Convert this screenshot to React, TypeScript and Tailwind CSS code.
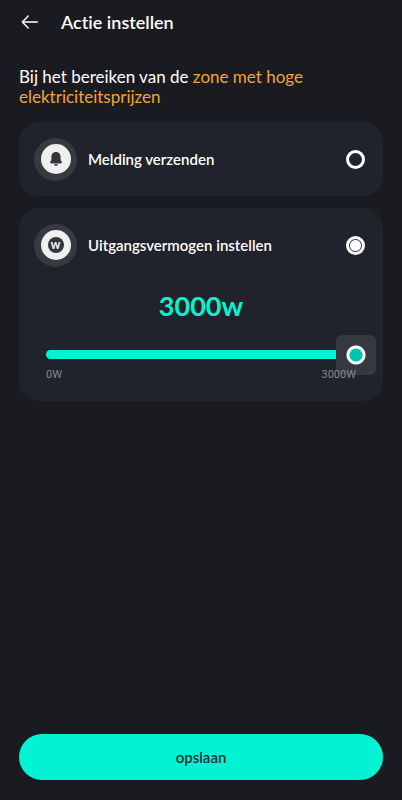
import { useState } from 'react';
import type { ReactNode } from 'react';

type Action = 'notify' | 'power';

const MAX_POWER = 3000;

const BellIcon = () => (
  <svg viewBox="0 0 14 16" className="h-4 w-[14px]" fill="#33363d" aria-hidden="true">
    <path d="M7 1C4 1 2.400 3.300 2.400 6v2.400c0 .8-.4 1.300-.9 1.900-.8 1-.3 2.100.9 2.100h9.200c1.200 0 1.700-1.100.9-2.100-.5-.6-.9-1.100-.9-1.900V6C11.600 3.300 10 1 7 1z" />
    <path d="M5 13.200h4c-.2 1-1 1.700-2 1.700s-1.800-.7-2-1.700z" />
  </svg>
);

const WattIcon = () => (
  <span className="flex size-4 items-center justify-center rounded-full bg-[#33363d] text-[9px] leading-none font-black text-white">
    W
  </span>
);

interface OptionProps {
  id: Action;
  label: string;
  icon: ReactNode;
  selected: Action;
  onSelect: (id: Action) => void;
}

const ActionOption = ({ id, label, icon, selected, onSelect }: OptionProps) => (
  <label className="flex h-[74px] cursor-pointer items-center pr-[18px] pl-[15px]">
    <span className="flex size-[43px] shrink-0 items-center justify-center rounded-full bg-[#383a41]">
      <span className="flex size-[30px] items-center justify-center rounded-full bg-[#efefef]">{icon}</span>
    </span>
    <span className="ml-[11px] flex-1 text-[15px] font-semibold">{label}</span>
    <input
      type="radio"
      name="action"
      value={id}
      checked={selected === id}
      onChange={() => onSelect(id)}
      className="size-[19px] appearance-none rounded-full border-[3px] border-white bg-clip-padding checked:bg-[radial-gradient(circle,#fff_5px,#33363d_6px)]"
    />
  </label>
);

const App = () => {
  const [selected, setSelected] = useState<Action>('power');
  const [power, setPower] = useState(MAX_POWER);

  return (
    <div className="flex min-h-screen flex-col bg-[#1a1b20] font-['Lato',sans-serif] text-white [font-variant-ligatures:none]">
      <header className="flex h-11 items-center pl-5">
        <button type="button" aria-label="Terug" className="flex size-5 items-center justify-center">
          <svg viewBox="0 0 20 20" className="size-5" fill="none" stroke="currentColor" strokeWidth="1.400" strokeLinecap="round" strokeLinejoin="round">
            <path d="M17.300 10H2.400M8.200 4 2.300 10l5.900 6" />
          </svg>
        </button>
        <h1 className="ml-[21px] text-[18px] leading-5 font-semibold">Actie instellen</h1>
      </header>

      <main className="flex flex-1 flex-col px-[19px] pt-[23px] pb-5">
        <p className="text-[17px] leading-5">
          Bij het bereiken van de <span className="text-[#f0a33c]">zone met hoge elektriciteitsprijzen</span>
        </p>

        <section className="mt-[15px] rounded-[20px] bg-[#21232c]">
          <ActionOption id="notify" label="Melding verzenden" icon={<BellIcon />} selected={selected} onSelect={setSelected} />
        </section>

        <section className="mt-3 rounded-[20px] bg-[#21232c] pb-[18px]">
          <ActionOption id="power" label="Uitgangsvermogen instellen" icon={<WattIcon />} selected={selected} onSelect={setSelected} />
          <output htmlFor="power" className="block text-center text-[27px] leading-[48px] font-bold text-[#0df0d0]">
            {power}w
          </output>
          <div className="relative mx-[27px] mt-5 h-[9px] rounded-full bg-[#383a41]">
            <div className="h-full rounded-full bg-[#02f3d4]" style={{ width: `${(power / MAX_POWER) * 100}%` }} />
            <input
              id="power"
              type="range"
              min={0}
              max={MAX_POWER}
              step={100}
              value={power}
              onChange={(e) => setPower(Number(e.target.value))}
              aria-label="Uitgangsvermogen"
              className="absolute -inset-x-5 -top-[15px] h-10 appearance-none bg-transparent [&::-webkit-slider-thumb]:size-10 [&::-webkit-slider-thumb]:appearance-none [&::-webkit-slider-thumb]:rounded-[6px] [&::-webkit-slider-thumb]:bg-[radial-gradient(circle,#04c3ae_6px,#fff_7px,#fff_9px,#363840_10px)]"
            />
          </div>
          <div className="pointer-events-none relative mx-[27px] mt-2 flex justify-between font-['Roboto',sans-serif] text-[11px] leading-4 text-[#858891]">
            <span>0W</span>
            <span>{MAX_POWER}W</span>
          </div>
        </section>

        <button type="button" className="mt-auto h-[46px] rounded-full bg-[#02f3d4] text-[15px] font-semibold text-[#15302f]">
          opslaan
        </button>
      </main>
    </div>
  );
};

export default App;
